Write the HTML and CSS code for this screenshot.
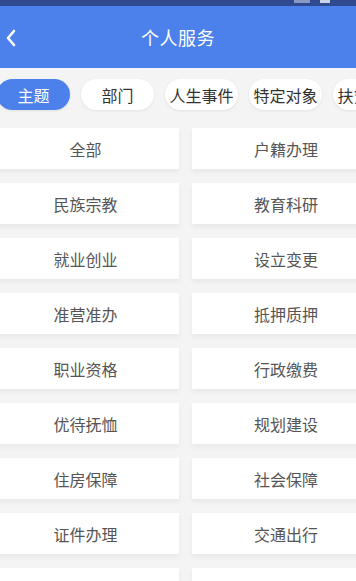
FILE: index.html
```html
<!DOCTYPE html>
<html lang="zh">
<head>
    <meta charset="UTF-8">
    <meta name="viewport" content="width=device-width, initial-scale=1.0">
    <title>个人服务</title>
    <link rel="stylesheet" href="styles.css">
</head>
<body>
    <div class="statusbar">
        <span class="dot wide"></span>
        <span class="dot"></span>
    </div>
    <div class="header">
        <svg class="back" width="12" height="18" viewBox="0 0 12 18">
            <path d="M9 2 L3 9 L9 16" fill="none" stroke="#fff" stroke-width="2.6" stroke-linecap="round" stroke-linejoin="round"/>
        </svg>
        <h1>个人服务</h1>
    </div>

    <div class="tabs">
        <div class="tab active">主题</div>
        <div class="tab">部门</div>
        <div class="tab">人生事件</div>
        <div class="tab">特定对象</div>
        <div class="tab">扶贫攻坚</div>
    </div>

    <div class="grid">
        <div class="card">全部</div>
        <div class="card">户籍办理</div>
        <div class="card">民族宗教</div>
        <div class="card">教育科研</div>
        <div class="card">就业创业</div>
        <div class="card">设立变更</div>
        <div class="card">准营准办</div>
        <div class="card">抵押质押</div>
        <div class="card">职业资格</div>
        <div class="card">行政缴费</div>
        <div class="card">优待抚恤</div>
        <div class="card">规划建设</div>
        <div class="card">住房保障</div>
        <div class="card">社会保障</div>
        <div class="card">证件办理</div>
        <div class="card">交通出行</div>
        <div class="card">婚姻登记</div>
        <div class="card">医疗卫生</div>
    </div>
</body>
</html>
```

FILE: styles.css
```css
*{
    margin: 0;
    padding: 0;
    box-sizing: border-box;
}
body{
    width: 356px;
    height: 581px;
    overflow: hidden;
    background-color: #f4f4f4;
    font-family: "Noto Sans CJK SC", "Noto Sans", sans-serif;
}
.statusbar{
    height: 6px;
    background-color: #2f4a8e;
    display: flex;
    justify-content: flex-end;
    gap: 10px;
    padding-right: 26px;
}
.dot{
    width: 10px;
    height: 3px;
    background-color: #c9d3ea;
}
.dot.wide{
    width: 16px;
    background-color: #8899c4;
}
.header{
    height: 62px;
    background-color: #4c80ea;
    display: flex;
    align-items: center;
    justify-content: center;
    position: relative;
}
.back{
    position: absolute;
    left: 5px;
    top: 23px;
}
.header h1{
    color: #fff;
    font-size: 18px;
    font-weight: normal;
    letter-spacing: 0.5px;
}
.tabs{
    display: flex;
    gap: 11px;
    margin-left: -3px;
    padding-top: 11px;
    white-space: nowrap;
}
.tab{
    flex: none;
    width: 73px;
    height: 31px;
    border-radius: 16px;
    background-color: #fff;
    box-shadow: 0 1px 3px rgba(0,0,0,0.08);
    color: #333;
    font-size: 16px;
    display: flex;
    align-items: center;
    justify-content: center;
}
.tab.active{
    background-color: #4c80ea;
    color: #fff;
}
.grid{
    display: grid;
    grid-template-columns: 187px 188px;
    column-gap: 13px;
    row-gap: 14px;
    margin-left: -8px;
    margin-top: 18px;
}
.card{
    height: 41px;
    background-color: #fff;
    box-shadow: 0 3px 5px rgba(0,0,0,0.05);
    color: #555;
    font-size: 16px;
    display: flex;
    align-items: center;
    justify-content: center;
}
```
